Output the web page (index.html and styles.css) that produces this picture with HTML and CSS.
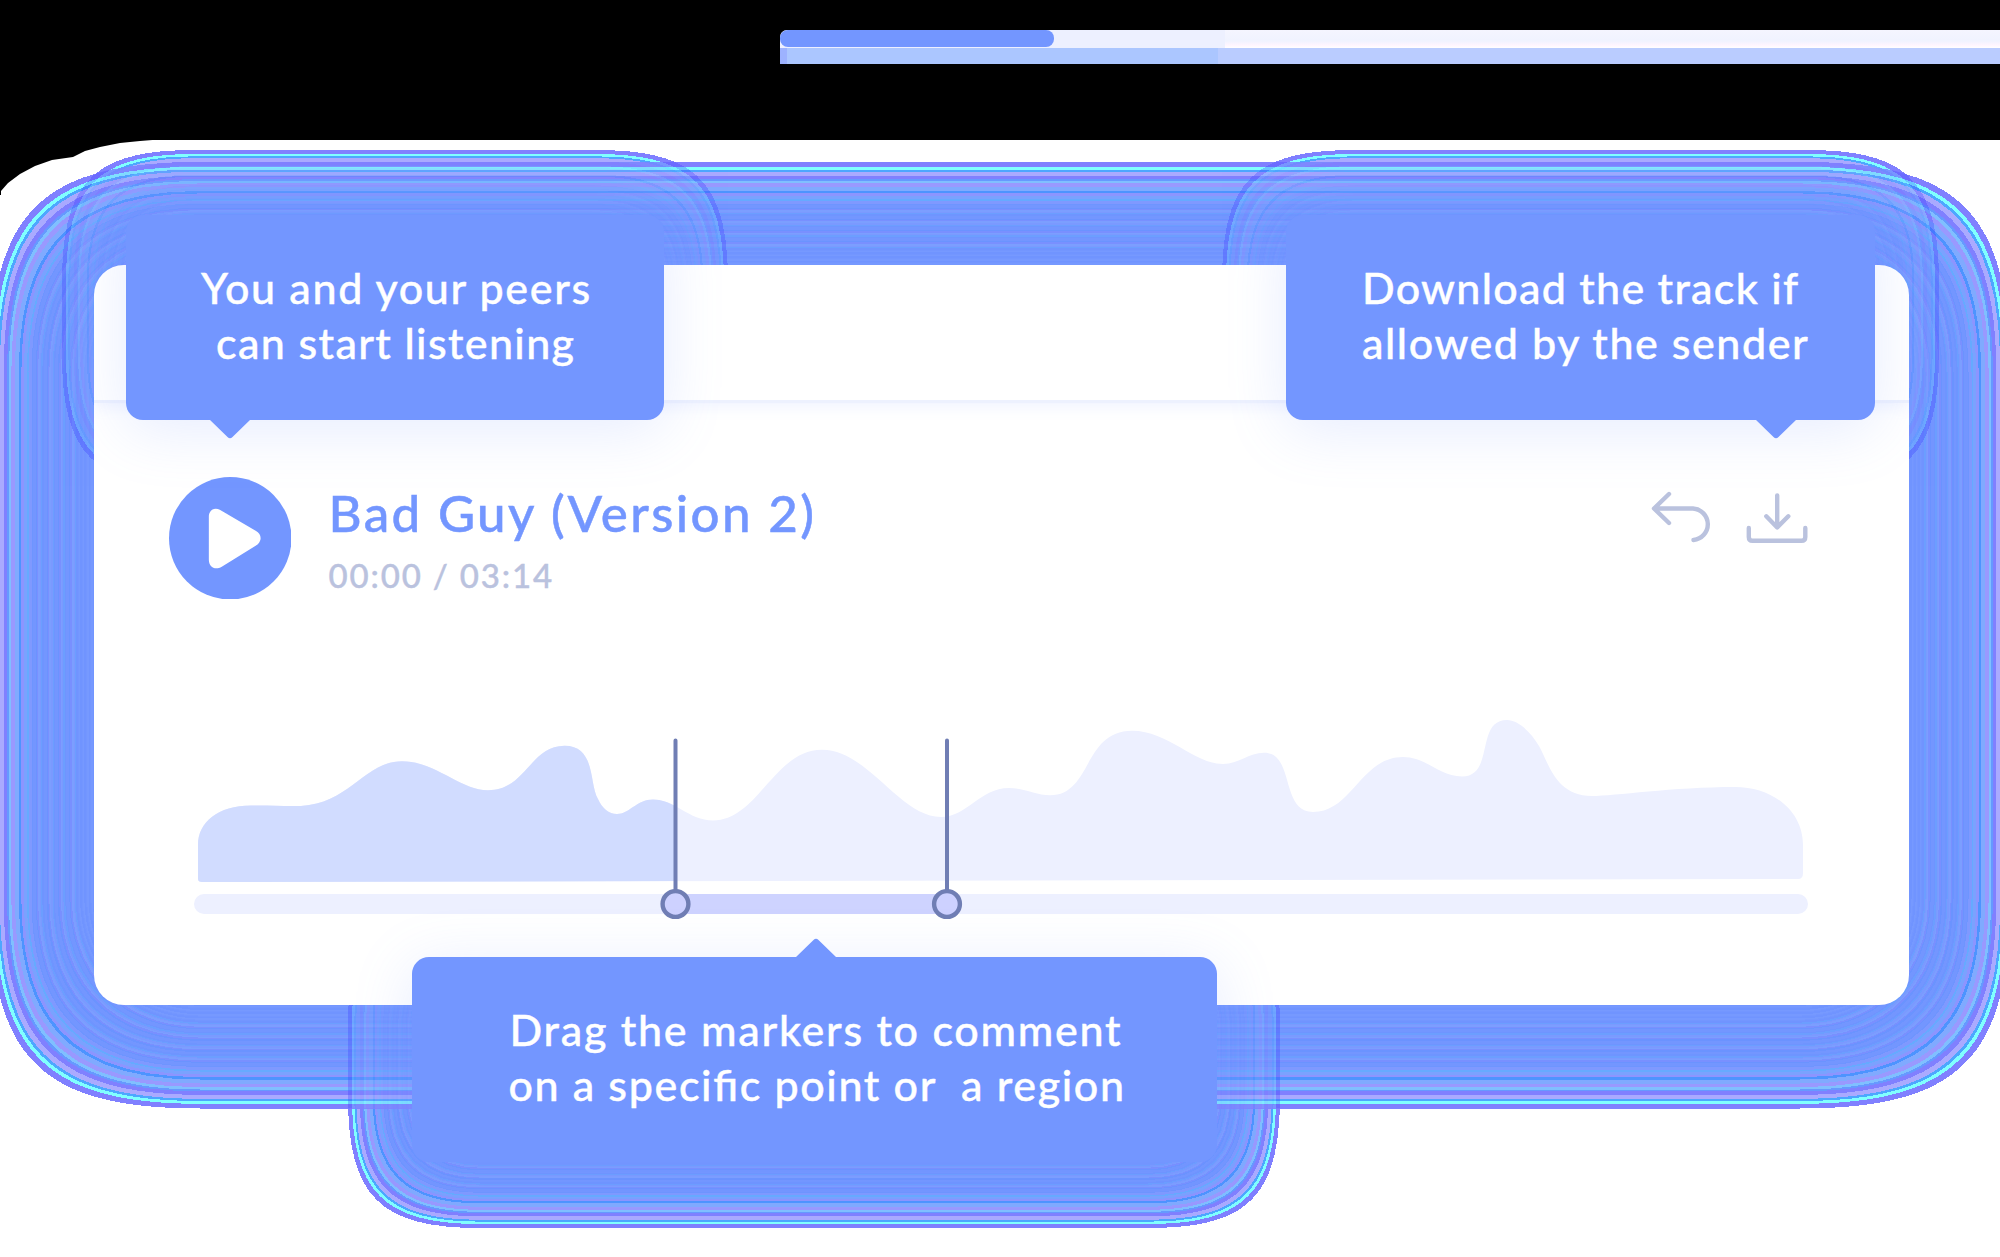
FILE: index.html
```html
<!DOCTYPE html>
<html lang="en">
<head>
<meta charset="utf-8">
<title>Track player</title>
<link rel="stylesheet" href="styles.css">
</head>
<body>
<div class="stage">
  <svg class="halo" viewBox="0 0 2000 1257" aria-hidden="true">
    <path fill="#000" d="M0 139H165L140 141L120 143L100 147L85 151L73 157L52 160L35 166L20 174L8 183L1 191V195H0Z"/>
    <g id="halo"></g>
  </svg>
  <header class="top">
    <div class="upload"><div class="upload-track"><div class="upload-fill"></div></div><div class="upload-base"></div></div>
  </header>
  <main class="card">
    <div class="card-head"></div>
    <section class="player">
      <div class="info">
        <svg class="play" viewBox="0 0 123 123"><circle cx="61.5" cy="61.5" r="61.5" fill="#7396ff"/><path d="M40 40C40 34 45 30 51 33L87 54Q92 57 92 61.500Q92 66 87 69L53 90C46 94 40 90 40 83Z" fill="#fff"/></svg>
        <div class="names"><h1><span class="l-title">Bad Guy (Version 2)</span></h1><p><span class="l-time">00:00 / 03:14</span></p></div>
        <svg class="actions" viewBox="1650 490 160 56" fill="none" stroke="#bac2de" stroke-width="4.400" stroke-linecap="round" stroke-linejoin="round"><path d="M1669 494L1654 508.500L1669 523M1655 508.500H1693A15.800 15.800 0 0 1 1693.500 540"/><path d="M1777.200 495.500V527M1766.300 516.300L1777.200 527.500L1788.300 516.300M1748.800 528V537Q1748.800 540.800 1752.500 540.800H1801.500Q1805.300 540.800 1805.300 537V528"/></svg>
      </div>
      <svg class="wave" viewBox="194 710 1614 210">
        <defs>
          <path id="shape" d="M198 845C198 822 218 805.500 251 805.500C268 805 283 806.500 301 806C350 803 365 761.300 402 761.300C436 761.300 460 790.300 488 790.300C526 790.300 530 745.700 564.500 745.700C596 745.700 589 784 598 799C602 808 609 814 617 814C629 814 637 799.500 653 799.500C675 799.500 689 820.500 713 820.500C758 820.500 774 749.800 822 749.800C868 749.800 900 817 941 817C967 817 980 788 1009 788C1024 788 1036 795.300 1050 795.300C1092 795.300 1083 730.800 1132 730.800C1168 730.800 1194 764 1223 764C1238 764 1249 752.700 1264 752.700C1295 752.700 1280 812 1313 812C1352 812 1361 757 1403 757C1426 757 1440 776.500 1462 776.500C1495 776.500 1475 720 1507 720C1518 720 1531 732 1539 746C1549 764 1556 796 1592 796C1614 796 1673 787 1735 787C1773 787 1803 811 1803 845V873Q1803 879 1798 879L202 882Q198 882 198 879Z"/>
          <clipPath id="played"><path d="M194 710H675.500V900H194Z"/></clipPath>
        </defs>
        <use href="#shape" fill="#edf0ff"/>
        <use href="#shape" fill="#d1dcff" clip-path="url(#played)"/>
        <rect x="194" y="894" width="1614" height="20" rx="10" fill="#edf0ff"/>
        <path d="M675 894H947V914H675Z" fill="#ced3ff"/>
        <g stroke="#707eb4" stroke-linecap="round" fill="#cdd1ff"><path d="M675.500 740.500V892M947 740.500V892" stroke-width="4"/><circle cx="675.500" cy="904" r="12.900" stroke-width="4.400"/><circle cx="947" cy="904" r="12.900" stroke-width="4.400"/></g>
      </svg>
    </section>
  </main>
  <div class="tip tip-play"><span class="l-1">You and your peers</span><span class="l-2">can start listening</span><svg class="arrow" viewBox="0 0 42 20"><path d="M0 0H42L23.500 18Q21 20.500 18.500 18Z"/></svg></div>
  <div class="tip tip-download"><span class="l-3">Download the track if</span><span class="l-4">allowed by the sender</span><svg class="arrow" viewBox="0 0 42 20"><path d="M0 0H42L23.500 18Q21 20.500 18.500 18Z"/></svg></div>
  <div class="tip tip-drag"><span class="l-5">Drag the markers to comment</span><span class="l-6">on a specific point or&nbsp; a region</span><svg class="arrow" viewBox="0 0 42 20"><path d="M0 0H42L23.500 18Q21 20.500 18.500 18Z"/></svg></div>
</div>
<script src="halo.js"></script>
</body>
</html>
```
FILE: styles.css
```css
* { box-sizing: border-box; }
body { margin: 0; background: #fff; font-family: Lato, "Open Sans", sans-serif; }
.stage { position: relative; width: 2000px; height: 1257px; overflow: hidden; }
.halo { position: absolute; left: 0; top: 0; width: 2000px; height: 1257px; }
.top { height: 140px; background: #000; padding: 30px 0 0 780px; }
.upload-track { height: 18px; background: linear-gradient(90deg, #edf0ff 445px, transparent 445px), linear-gradient(#f5f5ff, #f0f3ff 60%, #fff5ff 85%, #fff); border-top-left-radius: 7px; }
.upload-fill { width: 274px; height: 17px; border-radius: 8px; background: #7396ff; }
.upload-base { height: 16px; background: linear-gradient(90deg, #9db2ff 7px, #abc6ff 7px, #abc6ff 438px, #baccff 438px); }
.card { position: relative; margin: 125px 0 0 94px; width: 1815px; height: 740px; border-radius: 30px; background: #fff; overflow: hidden; }
.card-head { height: 138px; border-bottom: 3px solid #edf1fe; box-shadow: 0 4px 14px #7396ff1c; }
.player { padding: 74px 100px 0 75px; }
.info { display: flex; align-items: flex-start; height: 233px; margin-top: -0.5px; }
.play { width: 122.5px; height: 122.5px; margin-left: -0.5px; }
.names { margin-left: 37.5px; flex: 1; }
h1 { margin: 4px 0 0; font-size: 51px; line-height: 64px; font-weight: 500; color: #7396ff; white-space: nowrap; -webkit-text-stroke: 0.5px #7396ff; }
.names p { margin: 10px 0 0; font-size: 33px; line-height: 40px; font-weight: 500; color: #bac2de; -webkit-text-stroke: 0.4px #bac2de; }
.actions { width: 160px; height: 56px; margin: 13px -1px 0 0; }
.wave { display: block; width: 1614px; height: 210px; margin-left: 25px; }
.tip { position: absolute; display: flex; flex-direction: column; background: #7396ff; color: #fff; font-size: 43px; line-height: 55px; font-weight: 500; white-space: nowrap; border-radius: 17px; box-shadow: 0 10px 60px #7396ff2e; -webkit-text-stroke: 0.4px #fff; }
.tip-play { left: 126px; top: 215px; width: 538px; height: 205px; padding: 45px 0 0 75px; }
.tip-download { left: 1286px; top: 215px; width: 589px; height: 205px; padding: 45px 0 0 76px; }
.tip-drag { left: 411.5px; top: 957px; width: 805.5px; height: 205px; padding: 45px 0 0 97px; }
.arrow { position: absolute; width: 42px; height: 20px; fill: #7396ff; top: 204px; }
.tip-play .arrow { left: 83px; }
.tip-download .arrow { left: 469px; }
.tip-drag .arrow { left: 383px; top: -19px; transform: rotate(180deg); }
.l-title { letter-spacing: 2.42px; }
.l-time { letter-spacing: 1.85px; }
.l-1 { letter-spacing: 1.65px; }
.l-2 { letter-spacing: 1.36px; padding-left: 15px; }
.l-3 { letter-spacing: 1.27px; }
.l-4 { letter-spacing: 1.55px; }
.l-5 { letter-spacing: 1.74px; padding-left: 1px; }
.l-6 { letter-spacing: 1.63px; font-feature-settings: "liga" 1; }
```
FILE: halo.js
```
// Concentric contour bands: [thickness, colour] from the outside in.
const bands = [
  [4.7, '#8080ff'], [2.8, '#80ffff'], [2.2, '#4da6ff'], [4, '#aaaaff'], [3.5, '#8080ff'],
  [1.8, '#6699ff'], [2.4, '#80bfff'], [3.6, '#9999ff'], [4, '#80aaff'], [2.4, '#4d94ff'],
  [2.6, '#8c95ff'], [3, '#7aa2ff'], [1.5, '#66aaff'], [3, '#7f99ff']
];
const fine = ['#6e95ff', '#7c9eff', '#7396ff', '#6c9eff', '#7990ff', '#7396ff', '#7a9aff', '#6b93ff'];
for (let i = 0; i < 48; i++) bands.push([1 + (i * 7 % 3) * 0.4, i < 32 ? fine[i * 5 % 8] : ['#7396ff', '#7699ff', '#7094ff'][i % 3]]);
bands.push([1, '#7396ff']);

// Where a bubble's glow crosses the card's glow, its bands are darker and fainter.
const crossed = { '#8080ff': '#3c3cff', '#80ffff': '#66c8ff', '#aaaaff': '#7a9cff' };

function contour(x0, y0, x1, y1, e, d) {
  const l = x0 + d, t = y0 + d, r = x1 - d, b = y1 - d, q = e - d, c = q * (0.24 + 0.2 * Math.min(1, d / 100));
  return `M${l + q} ${t}H${r - q}C${r - c} ${t} ${r} ${t + c} ${r} ${t + q}V${b - q}C${r} ${b - c} ${r - c} ${b} ${r - q} ${b}H${l + q}C${l + c} ${b} ${l} ${b - c} ${l} ${b - q}V${t + q}C${l} ${t + c} ${l + c} ${t} ${l + q} ${t}Z`;
}
function halo(x0, y0, x1, y1, e, depth, scale, opacity) {
  let d = 0, out = '';
  bands.forEach(([w, color], i) => {
    if (d > depth) return;
    const fill = opacity < 1 && (i ? i < 4 && crossed[color] : crossed[color]) || color;
    out += `<path d="${contour(x0, y0, x1, y1, e, d)}" fill="${fill}"/>`;
    d += w * scale;
  });
  out += `<path d="${contour(x0, y0, x1, y1, e, Math.min(d, depth))}" fill="#7396ff"/>`;
  return `<g shape-rendering="crispEdges" opacity="${opacity}">${out}</g>`;
}
const card = [-10, 162, 2010, 1108.5, 210];
const tips = [[62, 150, 728, 486], [1222, 150, 1939, 486], [348, 893, 1280, 1228]];
const draw = o => tips.map(t => halo(...t, 132, 63, 0.85, o)).join('');
document.getElementById('halo').innerHTML =
  `<clipPath id="card-glow"><path d="${contour(...card, 0)}"/></clipPath>` +
  draw(1) + halo(...card, 103, 1, 1) + `<g clip-path="url(#card-glow)">${draw(0.3)}</g>`;
```
